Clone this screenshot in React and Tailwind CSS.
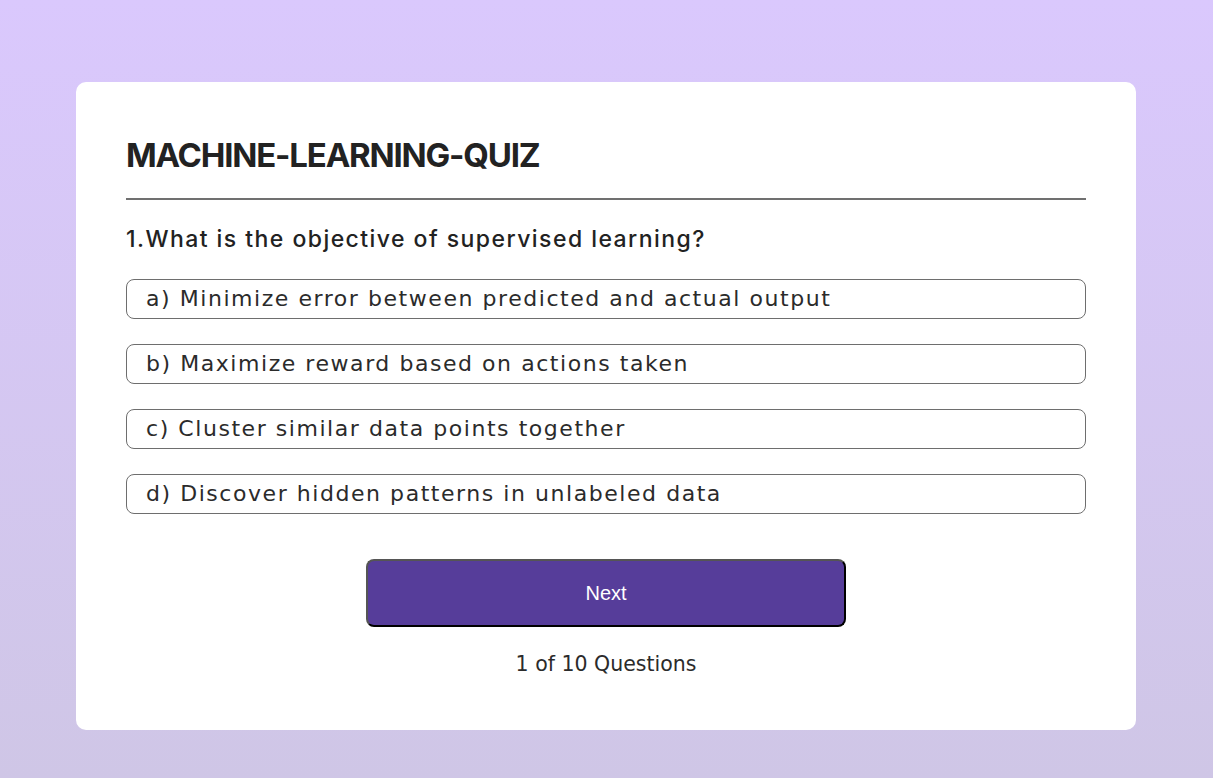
export default function App() {
  const options = [
    "a) Minimize error between predicted and actual output",
    "b) Maximize reward based on actions taken",
    "c) Cluster similar data points together",
    "d) Discover hidden patterns in unlabeled data",
  ];
  return (
    <div
      className="min-h-[778px] w-full bg-gradient-to-b from-[#dac8fd] to-[#cfc6e6] pt-[82px] pb-[48px]"
      style={{ fontFamily: "Inter, 'Noto Sans', sans-serif" }}
    >
      <div className="ml-[76px] w-[1060px] h-[648px] rounded-[10px] bg-white px-[50px] pt-[53px] flex flex-col">
        <h1 className="h-[40px] leading-[40px] text-[33px] font-bold tracking-[-1.2px] text-[#222222]">
          MACHINE-LEARNING-QUIZ
        </h1>
        <div className="mt-[23px] h-[2px] bg-[#707070]" />
        <h2 className="mt-[24px] h-[30px] leading-[30px] text-[23px] font-medium tracking-[1.45px] text-[#222222]">
          1.What is the objective of supervised learning?
        </h2>
        <ul className="mt-[25px] flex flex-col gap-[25px]">
          {options.map((o) => (
            <li
              key={o}
              className="h-[40px] rounded-[8px] border border-[#6e6e6e] pl-[19px] leading-[38px] text-[22px] tracking-[1.55px] text-[#2b2b2b]"
              style={{ fontFamily: "'DejaVu Sans', sans-serif" }}
            >
              {o}
            </li>
          ))}
        </ul>
        <button
          className="mt-[45px] mx-auto w-[480px] h-[68px] rounded-[8px] border-2 border-t-[#555555] border-l-[#555555] border-r-black border-b-black bg-[#563d9a] text-white text-[20px]"
          style={{ fontFamily: "'Liberation Sans', Arial, sans-serif" }}
        >
          Next
        </button>
        <p
          className="mt-[23px] h-[28px] leading-[28px] text-center text-[20.5px] text-[#2b2b2b]"
          style={{ fontFamily: "'DejaVu Sans', sans-serif" }}
        >
          1 of 10 Questions
        </p>
      </div>
    </div>
  );
}
